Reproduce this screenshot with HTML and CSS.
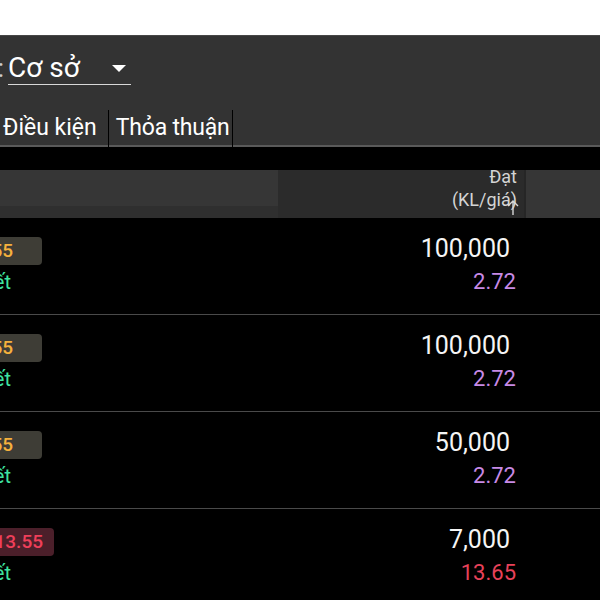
FILE: index.html
```html
<!DOCTYPE html>
<html lang="vi">
<head>
<meta charset="utf-8">
<link rel="stylesheet" href="styles.css">
</head>
<body>
<div class="topbar"></div>
<div class="toolbar">
  <div class="select-row">
    <div class="clip-end label-clip"><span class="label">Loại:</span></div>
    <div class="select"><span>Cơ sở</span><span class="caret"></span></div>
  </div>
  <div class="tabs">
    <div class="tab tab-first">Điều kiện</div>
    <div class="tab tab-second">Thỏa thuận</div>
  </div>
</div>
<div class="table">
  <div class="thead">
    <div class="th th-a"></div>
    <div class="th th-b">
      <span>Đạt</span>
      <span>(KL/giá)</span>
      <svg class="sort" width="14" height="18" viewBox="0 0 14 18"><path d="M7 17V3M2 8l5-5 5 5" fill="none" stroke="#d8d8d8" stroke-width="1.4"/></svg>
    </div>
    <div class="th th-c"></div>
  </div>

  <div class="row">
    <div class="cell cell-a">
      <div class="clip-end badge-clip"><span class="badge badge-ref">13.55</span></div>
      <div class="clip-end status-clip"><span class="status">Đã khớp hết</span></div>
    </div>
    <div class="cell cell-b">
      <span class="qty">100,000</span>
      <span class="price price-ref">2.72</span>
    </div>
    <div class="cell cell-c"></div>
  </div>

  <div class="row">
    <div class="cell cell-a">
      <div class="clip-end badge-clip"><span class="badge badge-ref">13.55</span></div>
      <div class="clip-end status-clip"><span class="status">Đã khớp hết</span></div>
    </div>
    <div class="cell cell-b">
      <span class="qty">100,000</span>
      <span class="price price-ref">2.72</span>
    </div>
    <div class="cell cell-c"></div>
  </div>

  <div class="row">
    <div class="cell cell-a">
      <div class="clip-end badge-clip"><span class="badge badge-ref">13.55</span></div>
      <div class="clip-end status-clip"><span class="status">Đã khớp hết</span></div>
    </div>
    <div class="cell cell-b">
      <span class="qty">50,000</span>
      <span class="price price-ref">2.72</span>
    </div>
    <div class="cell cell-c"></div>
  </div>

  <div class="row">
    <div class="cell cell-a">
      <div class="clip-end badge-clip-wide"><span class="badge badge-down">13.55</span></div>
      <div class="clip-end status-clip"><span class="status">Đã khớp hết</span></div>
    </div>
    <div class="cell cell-b">
      <span class="qty">7,000</span>
      <span class="price price-down">13.65</span>
    </div>
    <div class="cell cell-c"></div>
  </div>
</div>
</body>
</html>
```

FILE: styles.css
```css
* { box-sizing: border-box; }
html, body { margin: 0; padding: 0; }
body {
  width: 600px;
  height: 600px;
  overflow: hidden;
  background: #000;
  font-family: Roboto, "Noto Sans", sans-serif;
  color: #f2f2f2;
}
.topbar { height: 35px; background: #fff; }
.toolbar {
  background: #333;
  border-top: 1px solid #474747;
}
.clip-end {
  display: flex;
  justify-content: flex-end;
  white-space: nowrap;
}
.select-row {
  height: 74px;
  display: flex;
  align-items: flex-start;
  padding-top: 16px;
}
.label-clip { width: 4px; font-size: 26px; line-height: 32px; color: #ccc; }
.select {
  margin-left: 4px;
  width: 123px;
  height: 33px;
  display: flex;
  align-items: center;
  justify-content: space-between;
  border-bottom: 1px solid #d8d8d8;
  font-size: 28px;
  line-height: 32px;
  color: #fff;
  padding-right: 5px;
}
.caret {
  width: 0; height: 0;
  border-left: 7px solid transparent;
  border-right: 7px solid transparent;
  border-top: 7px solid #fff;
}
.tabs {
  display: flex;
  height: 37px;
  border-bottom: 2px solid #5a5a5a;
}
.tab {
  height: 40px;
  padding: 0 6px 0 8px;
  font-size: 23px;
  line-height: 36px;
  color: #fff;
  border-right: 1px solid #000;
  margin-bottom: -5px;
}
.tab-first { padding-left: 3px; padding-right: 11px; }
.tab-second { padding-left: 7px; padding-right: 2px; letter-spacing: -0.2px; }
.table { margin-top: 23px; }
.thead {
  display: grid;
  grid-template-columns: 278px 246px 76px;
  height: 48px;
}
.th { overflow: hidden; }
.th-a { background: linear-gradient(#363636 0, #363636 36px, #2f2f2f 36px); }
.th-b {
  background: #2b2b2b;
  position: relative;
  display: flex;
  flex-direction: column;
  justify-content: flex-end;
  align-items: flex-end;
  padding: 0 7px 7px 0;
  font-size: 18px;
  line-height: 23px;
  color: #d4d4d4;
}
.th-c { background: #363636; border-left: 2px solid #262626; }
.sort { position: absolute; right: 4px; bottom: 2px; }
.row {
  display: grid;
  grid-template-columns: 278px 246px 76px;
  height: 97px;
  border-bottom: 1px solid #4a4a4a;
}
.cell-a {
  padding-top: 19px;
  display: flex;
  flex-direction: column;
}
.badge-clip { width: 42px; }
.badge-clip-wide { width: 54px; }
.badge {
  height: 28px;
  border-radius: 4px;
  padding: 0 11px 0 8px;
  font-size: 19px;
  font-weight: 500;
  line-height: 28px;
}
.badge-ref { background: #3e3d36; color: #f5b13d; padding-right: 29px; }
.badge-down { background: #4b1f2a; color: #ef3f5a; }
.status-clip { width: 11px; margin-top: 2px; }
.status {
  font-size: 20px;
  line-height: 30px;
  color: #3ee3a0;
}
.cell-b {
  display: flex;
  flex-direction: column;
  align-items: flex-end;
  padding-top: 14px;
}
.qty {
  font-size: 25px;
  line-height: 33px;
  padding-right: 14px;
  color: #f5f5f5;
}
.price {
  font-size: 22px;
  line-height: 33px;
  padding-right: 8px;
}
.price-ref { color: #c88ae6; }
.price-down { color: #e8425a; }
```
